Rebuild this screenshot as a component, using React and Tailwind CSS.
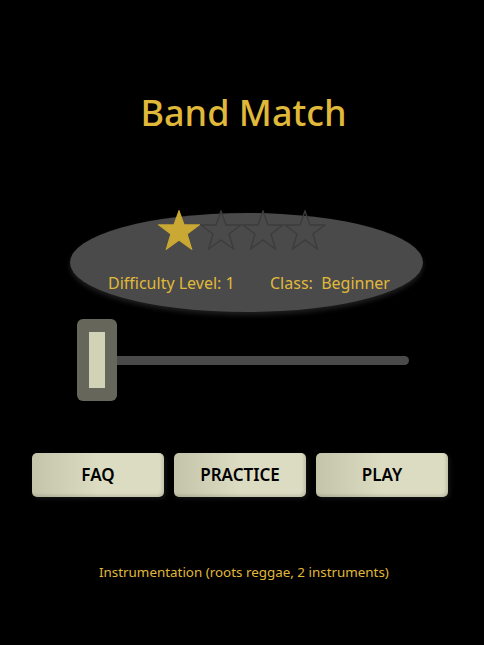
import React from 'react';

const Star = ({ filled }) => (
  <svg width="42" height="40" viewBox="0 0 42 40">
    <polygon
      points="21,1 26,15 41,15 29,24 33.5,39 21,30 8.5,39 13,24 1,15 16,15"
      fill={filled ? '#c9a833' : 'none'}
      stroke={filled ? '#c9a833' : '#3c3c3c'}
      strokeWidth="1.3"
      strokeLinejoin="miter"
    />
  </svg>
);

const buttons = ['FAQ', 'PRACTICE', 'PLAY'];

const App = () => {
  return (
    <div
      className="w-[484px] h-[645px] bg-black flex flex-col overflow-hidden"
      style={{ fontFamily: '"Noto Sans", "Open Sans", sans-serif' }}
    >
      {/* Title */}
      <h1 className="mt-[89px] ml-[3px] text-center text-[36px] leading-[48px] font-medium text-[#e0b93a]">
        Band Match
      </h1>

      {/* Difficulty oval */}
      <div className="ml-[70px] mt-[76px] w-[353px] h-[99px] rounded-[50%] bg-[#4a4a4a] shadow-[0_3px_5px_rgba(255,255,255,0.12)] flex flex-col">
        <div className="flex ml-[88px] -mt-[3px]">
          {[true, false, false, false].map((f, i) => (
            <Star key={i} filled={f} />
          ))}
        </div>
        <div className="flex mt-[23px] ml-[38px] text-[16px] leading-[20px] text-[#e0b93a]">
          <span className="w-[162px]">Difficulty Level: 1</span>
          <span>Class:&nbsp; Beginner</span>
        </div>
      </div>

      {/* Slider */}
      <div className="ml-[77px] mt-[7px] flex items-center">
        <div className="w-[40px] h-[82px] rounded-[6px] bg-[#66665a] flex items-center justify-center">
          <div className="w-[16px] h-[56px] bg-[#d2d2b6]" />
        </div>
        <div className="w-[292px] h-[9px] bg-[#4a4a4a] rounded-r-full" />
      </div>

      {/* Buttons */}
      <div className="ml-[32px] mt-[52px] flex gap-[10px]">
        {buttons.map((b) => (
          <button
            key={b}
            className="w-[132px] h-[44px] rounded-[5px] bg-gradient-to-r from-[#c4c4aa] via-[#dcdcc2] to-[#dcdcc2] shadow-[2px_2px_4px_rgba(255,255,255,0.08),inset_-2px_-2px_3px_rgba(0,0,0,0.12)] text-black text-[17px] font-semibold flex items-center justify-center"
          >
            {b}
          </button>
        ))}
      </div>

      {/* Footer */}
      <p className="mt-[65px] ml-[99px] text-[13.4px] leading-[20px] text-[#e0b93a]">
        Instrumentation (roots reggae, 2 instruments)
      </p>
    </div>
  );
};

export default App;
